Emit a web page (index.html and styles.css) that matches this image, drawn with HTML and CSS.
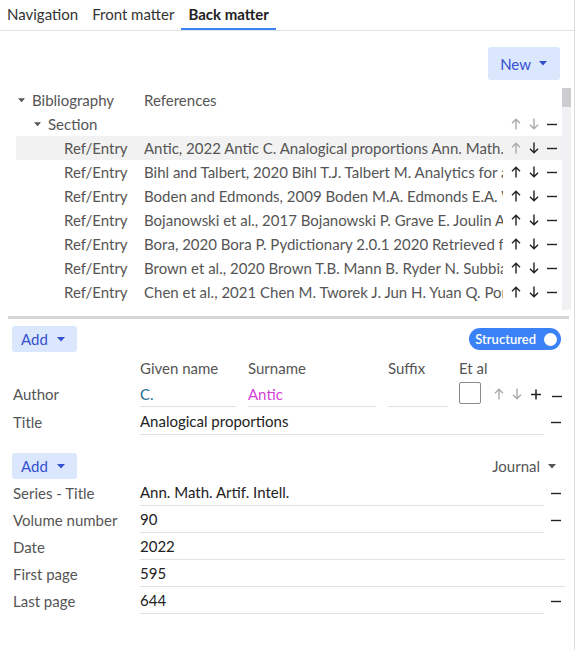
FILE: index.html
```html
<!DOCTYPE html>
<html>
<head>
<meta charset="utf-8">
<link rel="stylesheet" href="styles.css">
</head>
<body>
<svg width="0" height="0" style="position:absolute">
  <defs>
    <symbol id="up" viewBox="0 0 10 12"><path d="M5 11.5V1.2M1 5.2L5 1.2L9 5.2" fill="none" stroke="currentColor" stroke-width="1.4"/></symbol>
    <symbol id="down" viewBox="0 0 10 12"><path d="M5 0.5V10.8M1 6.8L5 10.8L9 6.8" fill="none" stroke="currentColor" stroke-width="1.4"/></symbol>
    <symbol id="minus" viewBox="0 0 10 12"><path d="M0 6.5H10" fill="none" stroke="currentColor" stroke-width="1.4"/></symbol>
    <symbol id="plus" viewBox="0 0 10 12"><path d="M0 6.5H10M5 1.5V11.5" fill="none" stroke="currentColor" stroke-width="1.5"/></symbol>
    <symbol id="caret" viewBox="0 0 8 5"><path d="M0 0H8L4 4.5Z" fill="currentColor"/></symbol>
  </defs>
</svg>
<div class="panel">
  <nav class="tabs">
    <span class="tab">Navigation</span>
    <span class="tab">Front matter</span>
    <span class="tab active">Back matter</span>
  </nav>

  <div class="toolbar">
    <button class="btn btn-new">New <svg class="caret"><use href="#caret"/></svg></button>
  </div>

  <div class="tree-wrap">
    <div class="tree">
      <div class="row">
        <div class="c1 lvl0"><svg class="tcaret"><use href="#caret"/></svg>Bibliography</div>
        <div class="c2">References</div>
        <div class="acts"></div>
      </div>
      <div class="row">
        <div class="c1 lvl1"><svg class="tcaret"><use href="#caret"/></svg>Section</div>
        <div class="c2"></div>
        <div class="acts"><svg class="ic dis"><use href="#up"/></svg><svg class="ic dis"><use href="#down"/></svg><svg class="ic"><use href="#minus"/></svg></div>
      </div>
      <div class="row sel">
        <div class="c1 lvl2">Ref/Entry</div>
        <div class="c2">Antic, 2022 Antic C. Analogical proportions Ann. Math. Artif. Intell. 90 2022 595 644</div>
        <div class="acts"><svg class="ic dis"><use href="#up"/></svg><svg class="ic"><use href="#down"/></svg><svg class="ic"><use href="#minus"/></svg></div>
      </div>
      <div class="row">
        <div class="c1 lvl2">Ref/Entry</div>
        <div class="c2">Bihl and Talbert, 2020 Bihl T.J. Talbert M. Analytics for autonomous systems</div>
        <div class="acts"><svg class="ic"><use href="#up"/></svg><svg class="ic"><use href="#down"/></svg><svg class="ic"><use href="#minus"/></svg></div>
      </div>
      <div class="row">
        <div class="c1 lvl2">Ref/Entry</div>
        <div class="c2">Boden and Edmonds, 2009 Boden M.A. Edmonds E.A. What is generative art?</div>
        <div class="acts"><svg class="ic"><use href="#up"/></svg><svg class="ic"><use href="#down"/></svg><svg class="ic"><use href="#minus"/></svg></div>
      </div>
      <div class="row">
        <div class="c1 lvl2">Ref/Entry</div>
        <div class="c2">Bojanowski et al., 2017 Bojanowski P. Grave E. Joulin A. Mikolov T.</div>
        <div class="acts"><svg class="ic"><use href="#up"/></svg><svg class="ic"><use href="#down"/></svg><svg class="ic"><use href="#minus"/></svg></div>
      </div>
      <div class="row">
        <div class="c1 lvl2">Ref/Entry</div>
        <div class="c2">Bora, 2020 Bora P. Pydictionary 2.0.1 2020 Retrieved from PyPI</div>
        <div class="acts"><svg class="ic"><use href="#up"/></svg><svg class="ic"><use href="#down"/></svg><svg class="ic"><use href="#minus"/></svg></div>
      </div>
      <div class="row">
        <div class="c1 lvl2">Ref/Entry</div>
        <div class="c2">Brown et al., 2020 Brown T.B. Mann B. Ryder N. Subbiah M. Kaplan J.</div>
        <div class="acts"><svg class="ic"><use href="#up"/></svg><svg class="ic"><use href="#down"/></svg><svg class="ic"><use href="#minus"/></svg></div>
      </div>
      <div class="row">
        <div class="c1 lvl2">Ref/Entry</div>
        <div class="c2">Chen et al., 2021 Chen M. Tworek J. Jun H. Yuan Q. Ponde de Oliveira Pinto H.</div>
        <div class="acts"><svg class="ic"><use href="#up"/></svg><svg class="ic"><use href="#down"/></svg><svg class="ic"><use href="#minus"/></svg></div>
      </div>
      <div class="row">
        <div class="c1 lvl2">Ref/Entry</div>
        <div class="c2">Colton, 2012 Colton S. The painting fool: stories from building an automated painter</div>
        <div class="acts"><svg class="ic"><use href="#up"/></svg><svg class="ic"><use href="#down"/></svg><svg class="ic"><use href="#minus"/></svg></div>
      </div>
    </div>
    <div class="scrollbar"><div class="thumb"></div></div>
  </div>

  <div class="divider"></div>

  <div class="form">
    <div class="bar">
      <button class="btn btn-add">Add <svg class="caret"><use href="#caret"/></svg></button>
      <span class="toggle">Structured<span class="knob"></span></span>
    </div>

    <div class="frow head">
      <div class="lbl"></div>
      <div class="col-given">Given name</div>
      <div class="col-sur">Surname</div>
      <div class="col-suf">Suffix</div>
      <div class="col-etal">Et al</div>
    </div>
    <div class="frow author">
      <div class="lbl">Author</div>
      <div class="col-given"><div class="inp given">C.</div></div>
      <div class="col-sur"><div class="inp sur">Antic</div></div>
      <div class="col-suf"><div class="inp suf"></div></div>
      <div class="col-etal"><span class="check"></span></div>
      <div class="aacts"><svg class="ic dis"><use href="#up"/></svg><svg class="ic dis"><use href="#down"/></svg><svg class="ic plus"><use href="#plus"/></svg></div>
      <svg class="ic rm"><use href="#minus"/></svg>
    </div>
    <div class="frow field">
      <div class="lbl">Title</div>
      <div class="val">Analogical proportions</div>
      <div class="slot"><svg class="ic"><use href="#minus"/></svg></div>
    </div>

    <div class="bar bar2">
      <button class="btn btn-add">Add <svg class="caret"><use href="#caret"/></svg></button>
      <span class="type">Journal <svg class="caret"><use href="#caret"/></svg></span>
    </div>

    <div class="frow field">
      <div class="lbl">Series - Title</div>
      <div class="val">Ann. Math. Artif. Intell.</div>
      <div class="slot"><svg class="ic"><use href="#minus"/></svg></div>
    </div>
    <div class="frow field">
      <div class="lbl">Volume number</div>
      <div class="val">90</div>
      <div class="slot"><svg class="ic"><use href="#minus"/></svg></div>
    </div>
    <div class="frow field">
      <div class="lbl">Date</div>
      <div class="val">2022</div>
    </div>
    <div class="frow field">
      <div class="lbl">First page</div>
      <div class="val">595</div>
    </div>
    <div class="frow field">
      <div class="lbl">Last page</div>
      <div class="val">644</div>
      <div class="slot"><svg class="ic"><use href="#minus"/></svg></div>
    </div>
  </div>
</div>
</body>
</html>
```

FILE: styles.css
```css
* { box-sizing: border-box; }
html, body { margin: 0; padding: 0; background: #fff; }
body {
  font-family: Lato, "Open Sans", "Liberation Sans", sans-serif;
  font-size: 15px;
  color: #222;
}
.panel {
  width: 575px;
  height: 650px;
  border-right: 1px solid #dcdcdc;
  overflow: hidden;
}

/* tabs */
.tabs {
  display: flex;
  height: 31px;
  border-bottom: 1px solid #e4e4e4;
}
.tab {
  padding: 0 7px;
  height: 30px;
  line-height: 28px;
  color: #333;
  border-bottom: 2px solid transparent;
}
.tab.active {
  font-weight: 700;
  color: #222;
  border-bottom-color: #3b82f6;
}

/* buttons */
.btn {
  font: inherit;
  border: 0;
  border-radius: 3px;
  background: #dbe7fd;
  color: #3450cf;
  display: inline-flex;
  align-items: center;
  cursor: pointer;
}
.caret { width: 8px; height: 5px; margin-left: 8px; }
.toolbar {
  display: flex;
  justify-content: flex-end;
  padding: 16px 14px 0 0;
}
.btn-new { height: 33px; padding: 0 13px 0 12px; }

/* tree */
.tree-wrap {
  display: flex;
  margin-top: 8px;
  padding-left: 16px;
  height: 222px;
}
.tree { width: 546px; overflow: hidden; }
.row {
  display: flex;
  align-items: center;
  height: 24px;
  color: #555;
  white-space: nowrap;
}
.row.sel { background: #f2f2f2; }
.c1 { width: 128px; flex: none; display: flex; align-items: center; }
.lvl0 { padding-left: 2px; }
.lvl1 { padding-left: 18px; }
.lvl2 { padding-left: 48px; }
.tcaret { width: 7px; height: 5px; margin-right: 7px; color: #555; }
.c2 { flex: 1; overflow: hidden; min-width: 0; margin-right: 8px; }
.acts { width: 46px; margin-right: 5px; flex: none; display: flex; align-items: center; gap: 8px; }
.ic { width: 10px; height: 12px; color: #222; flex: none; }
.ic.dis { color: #aaa; }
.scrollbar {
  width: 9px;
  background: #f1f1f3;
  flex: none;
}
.thumb { height: 19px; background: #cdcdd0; }

.divider {
  margin: 6px 5px 0 8px;
  height: 3px;
  background: #d6d6d6;
}

/* form */
.form { padding: 0 9px 0 13px; }
.bar {
  display: flex;
  align-items: center;
  justify-content: space-between;
  height: 26px;
  margin-top: 7px;
}
.btn-add { height: 26px; padding: 0 12px 0 9px; margin-left: -1px; }
.btn-add .caret { margin-left: 9px; }
.toggle {
  display: inline-flex;
  align-items: center;
  height: 22px;
  margin-right: 4px;
  padding: 0 4px 0 6px;
  border-radius: 11px;
  background: #3b82f6;
  color: #fff;
  font-size: 13px;
  font-weight: 600;
}
.knob {
  width: 13px; height: 13px;
  border-radius: 50%;
  background: #fff;
  margin-left: 8px;
}
.frow { display: flex; align-items: center; }
.lbl { width: 127px; flex: none; color: #555; }
.head { height: 20px; margin-top: 6px; color: #555; }
.col-given { width: 108px; flex: none; }
.col-sur { width: 140px; flex: none; }
.col-suf { width: 68px; flex: none; }
.col-etal { width: 35px; flex: none; }
.author { height: 27px; margin-top: 3px; align-items: flex-start; }
.author .lbl { line-height: 27px; }
.inp {
  height: 26px;
  line-height: 26px;
  border-bottom: 1px solid #e2e2e2;
  margin-right: 12px;
}
.inp.suf { margin-right: 8px; }
.given { color: #1f6f94; }
.sur { color: #d33fd6; }
.col-etal { padding-left: 3px; }
.author .col-etal { padding-top: 1px; }
.check {
  display: block;
  width: 22px; height: 22px;
  border: 1px solid #8a8a8a;
  border-radius: 2px;
  background: #fff;
}
.aacts { display: flex; gap: 8px; margin-left: 3px; padding-top: 7px; }
.aacts .plus { margin-left: 1px; }
.rm { margin-left: 11px; margin-top: 9px; }
.field { height: 27px; }
.val {
  flex: 1;
  height: 27px;
  line-height: 27px;
  border-bottom: 1px solid #e2e2e2;
  color: #222;
}
.slot { width: 21px; flex: none; display: flex; justify-content: flex-end; padding-right: 4px; }
.bar2 { margin-top: 18px; }
.type { color: #555; display: inline-flex; align-items: center; margin-right: 9px; }
.type .caret { margin-left: 8px; color: #555; }
```
